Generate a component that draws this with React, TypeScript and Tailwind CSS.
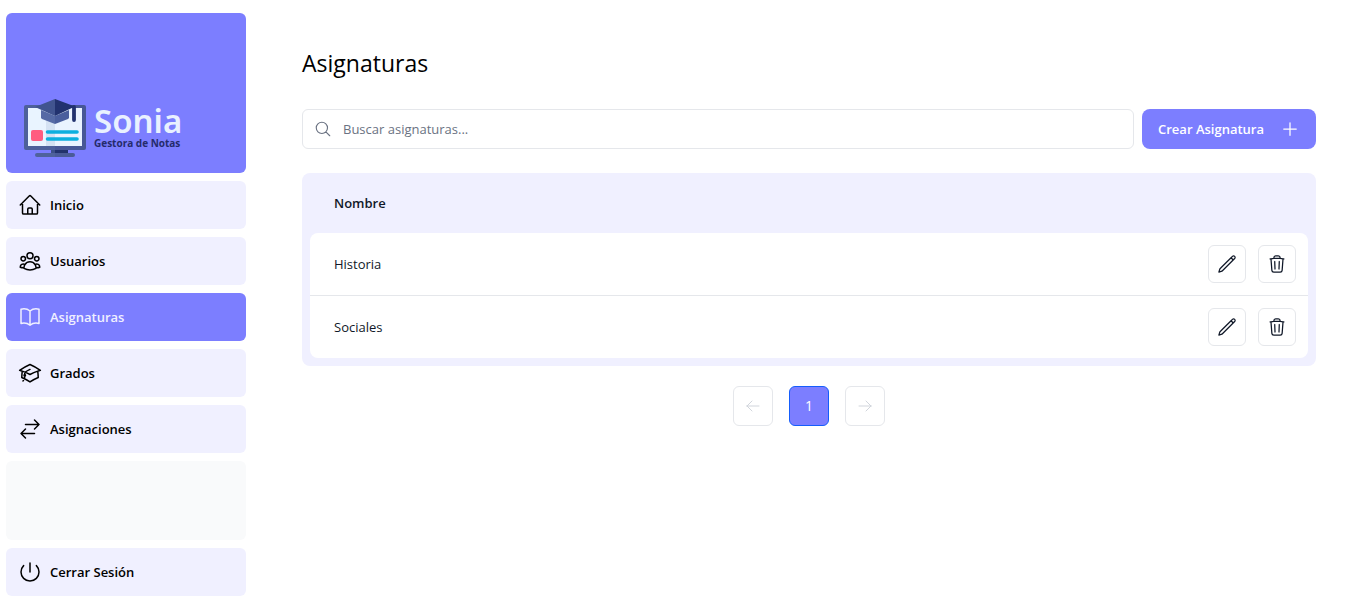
import type { ComponentType } from 'react';
import {
  HiOutlineAcademicCap,
  HiOutlineArrowLeft,
  HiOutlineArrowRight,
  HiOutlineArrowsRightLeft,
  HiOutlineBookOpen,
  HiOutlineHome,
  HiOutlineMagnifyingGlass,
  HiOutlinePencil,
  HiOutlinePlus,
  HiOutlinePower,
  HiOutlineTrash,
  HiOutlineUserGroup,
} from 'react-icons/hi2';

type Icon = ComponentType<{ className?: string }>;

const links: { name: string; href: string; icon: Icon }[] = [
  { name: 'Inicio', href: '#inicio', icon: HiOutlineHome },
  { name: 'Usuarios', href: '#usuarios', icon: HiOutlineUserGroup },
  { name: 'Asignaturas', href: '#asignaturas', icon: HiOutlineBookOpen },
  { name: 'Grados', href: '#grados', icon: HiOutlineAcademicCap },
  { name: 'Asignaciones', href: '#asignaciones', icon: HiOutlineArrowsRightLeft },
];

const subjects = ['Historia', 'Sociales'];

function Logo() {
  return (
    <a
      href="#inicio"
      className="flex h-40 items-end gap-2 rounded-md bg-[#7c7eff] px-[18px] pb-4"
    >
      <svg viewBox="0 0 62 58" className="h-[58px] w-[62px] shrink-0" aria-hidden="true">
        <path d="M27 48h4v6h-4z" fill="#3d5089" />
        <path d="M31 48h13v6H31z" fill="#22326d" />
        <path d="M13 54h18v4H13a2 2 0 0 1 0-4z" fill="#4f629c" />
        <path d="M31 54h18a2 2 0 0 1 0 4H31z" fill="#4a5b98" />
        <path d="M2 6h29v45H2a2 2 0 0 1-2-2V8a2 2 0 0 1 2-2z" fill="#4d609a" />
        <path d="M31 6h29a2 2 0 0 1 2 2v41a2 2 0 0 1-2 2H31z" fill="#475795" />
        <path d="M4 9h27v38H4z" fill="#e9f4ff" />
        <path d="M22 9h9v38h-9z" fill="#d5e2f3" />
        <path d="M31 9h27v38H31z" fill="#eaf3ff" />
        <rect x="7" y="31" width="12" height="11" rx="2" fill="#ff5c80" />
        <path d="M23.500 33H53M23.500 40H53" stroke="#0cafdf" strokeWidth="3.600" strokeLinecap="round" />
        <path d="M17 11l14 6v8l-13-5-1-1z" fill="#566aa5" />
        <path d="M31 17l14-6v8l-1 1-13 5z" fill="#4a5e9d" />
        <path d="M31 0v17L11 8z" fill="#41548f" />
        <path d="M31 0l20 7.500L31 17z" fill="#22326f" />
        <path d="M50 8v13" stroke="#22326f" strokeWidth="3.800" strokeLinecap="round" />
      </svg>
      <span className="flex flex-col pb-2">
        <span className="font-['Noto_Sans',sans-serif] text-[33px] leading-8 font-semibold text-[#e9f1ff]">Sonia</span>
        <span className="text-[10px] leading-3 font-bold text-[#252b6b]">Gestora de Notas</span>
      </span>
    </a>
  );
}

function Sidebar() {
  const item = 'flex h-12 items-center gap-2 rounded-md px-3 text-[13px] leading-5 font-semibold';
  return (
    <aside className="flex w-60 shrink-0 flex-col gap-2">
      <Logo />
      <nav className="flex flex-col gap-2">
        {links.map(({ name, href, icon: LinkIcon }) => {
          const active = name === 'Asignaturas';
          return (
            <a
              key={name}
              href={href}
              aria-current={active ? 'page' : undefined}
              className={`${item} ${active ? 'bg-[#7c7eff] text-[#f0f0ff]' : 'bg-[#f0f0ff] text-black'}`}
            >
              <LinkIcon className="size-6" />
              {name}
            </a>
          );
        })}
      </nav>
      <div className="grow rounded-md bg-gray-50" />
      <button type="button" className={`${item} bg-[#f0f0ff] text-black`}>
        <HiOutlinePower className="size-6" />
        Cerrar Sesión
      </button>
    </aside>
  );
}

function SubjectsTable() {
  const action = 'rounded-md border border-gray-200 p-2 text-gray-900';
  return (
    <div className="mt-6 rounded-lg bg-[#f0f0ff] px-2 pb-2">
      <table className="w-full border-separate border-spacing-0 text-left text-[13px] leading-5 text-gray-900">
        <thead>
          <tr>
            <th scope="col" className="px-6 py-5 font-semibold">Nombre</th>
            <td />
          </tr>
        </thead>
        <tbody>
          {subjects.map((subject, index) => {
            const first = index === 0;
            const last = index === subjects.length - 1;
            return (
              <tr key={subject}>
                <td
                  className={`bg-white py-3 pl-6 ${first ? 'rounded-tl-lg' : ''} ${last ? 'rounded-bl-lg' : 'border-b border-gray-200'}`}
                >
                  {subject}
                </td>
                <td
                  className={`bg-white py-3 pr-3 ${first ? 'rounded-tr-lg' : ''} ${last ? 'rounded-br-lg' : 'border-b border-gray-200'}`}
                >
                  <div className="flex justify-end gap-3">
                    <button type="button" aria-label={`Editar ${subject}`} className={action}>
                      <HiOutlinePencil className="size-5" />
                    </button>
                    <button type="button" aria-label={`Eliminar ${subject}`} className={action}>
                      <HiOutlineTrash className="size-5" />
                    </button>
                  </div>
                </td>
              </tr>
            );
          })}
        </tbody>
      </table>
    </div>
  );
}

function Pagination() {
  const box = 'flex size-10 items-center justify-center rounded-md border text-sm';
  return (
    <nav aria-label="Paginación" className="mt-5 flex justify-center gap-4">
      <button type="button" disabled aria-label="Anterior" className={`${box} border-gray-200 text-gray-300`}>
        <HiOutlineArrowLeft className="size-4" />
      </button>
      <button type="button" aria-current="page" className={`${box} border-blue-600 bg-[#7c7eff] text-white`}>
        1
      </button>
      <button type="button" disabled aria-label="Siguiente" className={`${box} border-gray-200 text-gray-300`}>
        <HiOutlineArrowRight className="size-4" />
      </button>
    </nav>
  );
}

export default function App() {
  return (
    <div className="flex min-h-screen bg-white px-[6px] pt-[13px] pb-[10px] font-['Open_Sans','Noto_Sans',sans-serif] text-black">
      <Sidebar />
      <main className="min-w-0 grow pt-8 pr-[35px] pl-14">
        <h1 className="text-[23px] leading-9">Asignaturas</h1>
        <div className="mt-7 flex gap-2">
          <div className="relative flex grow">
            <input
              type="text"
              aria-label="Buscar asignaturas"
              placeholder="Buscar asignaturas..."
              className="h-10 w-full rounded-md border border-gray-200 pr-3 pl-10 text-[13px] placeholder:text-gray-500"
            />
            <HiOutlineMagnifyingGlass className="pointer-events-none absolute top-[11px] left-3 size-[18px] text-gray-500" />
          </div>
          <button
            type="button"
            className="flex h-10 items-center gap-4 rounded-lg bg-[#7c7eff] px-4 text-[13px] leading-5 font-semibold text-white"
          >
            Crear Asignatura
            <HiOutlinePlus className="size-5" />
          </button>
        </div>
        <SubjectsTable />
        <Pagination />
      </main>
    </div>
  );
}
